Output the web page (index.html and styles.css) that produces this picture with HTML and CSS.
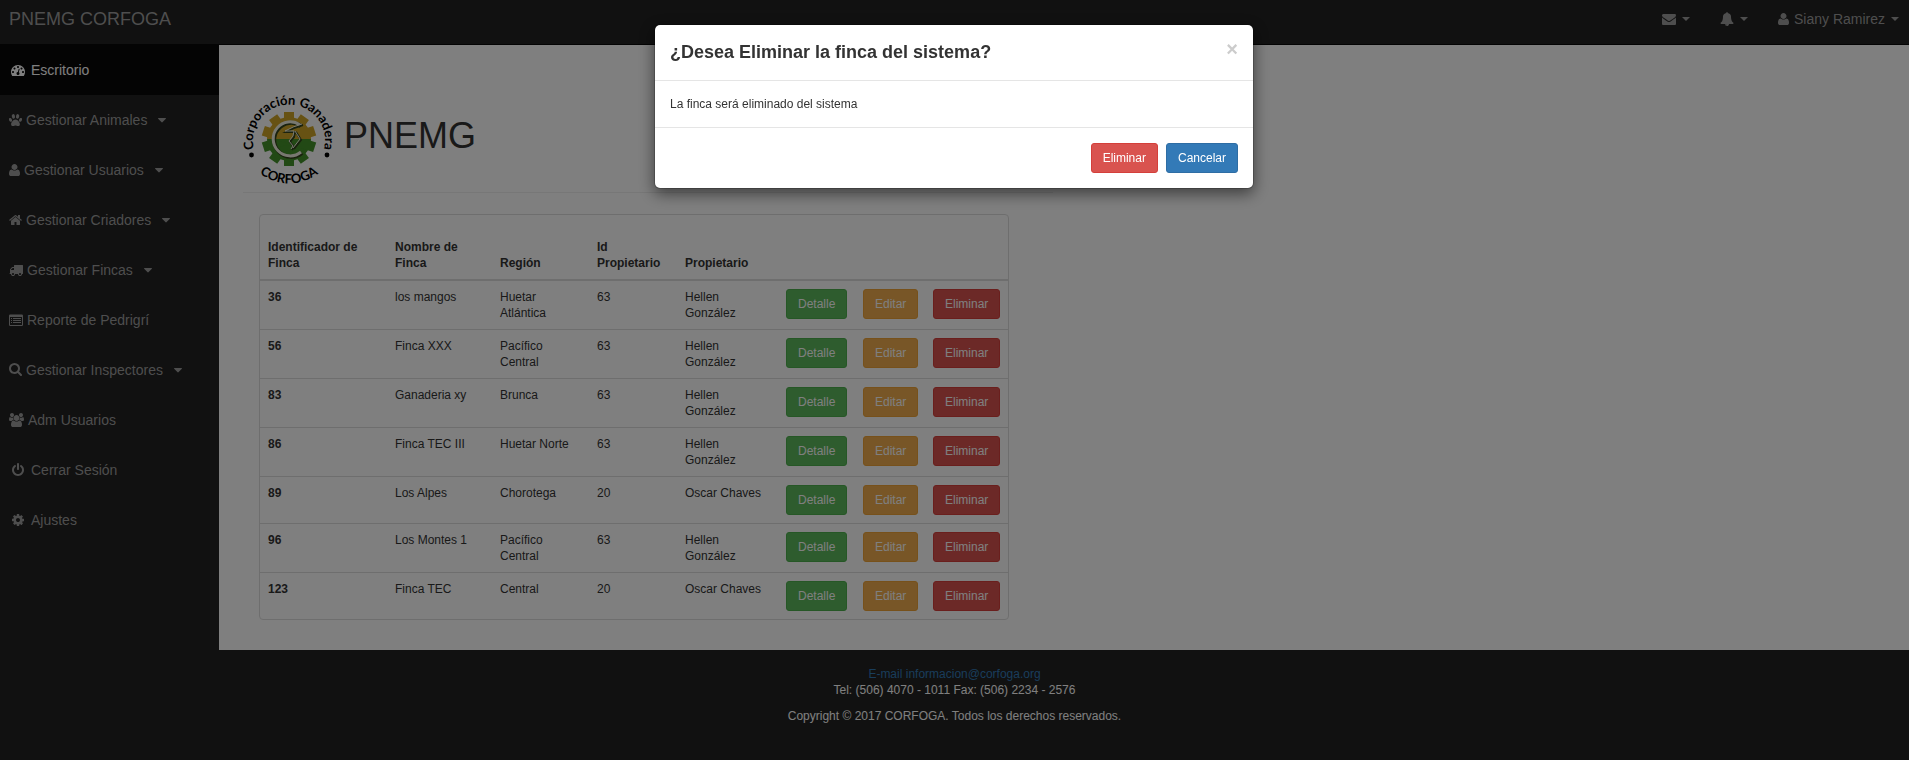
FILE: index.html
```html
<!DOCTYPE html>
<html lang="es">
<head>
<meta charset="utf-8">
<title>PNEMG CORFOGA</title>
<link rel="stylesheet" href="styles.css">
</head>
<body>
<svg class="sprite" aria-hidden="true">
  <symbol id="user" viewBox="192 0 1408 1792"><path d="M1600 1405q0 120-73 189.500t-194 69.500h-874q-121 0-194-69.500t-73-189.500q0-53 3.500-103.500t14-109 26.500-108.500 43-97.500 62-81 85.500-53.500 111.500-20q9 0 42 21.500t74.500 48 108 48 133.500 21.500 133.500-21.500 108-48 74.500-48 42-21.500q61 0 111.500 20t85.500 53.500 62 81 43 97.500 26.500 108.500 14 109 3.500 103.500zm-320-893q0 159-112.500 271.500t-271.500 112.500-271.500-112.500-112.500-271.500 112.500-271.500 271.500-112.500 271.500 112.500 112.500 271.500z"/></symbol>
  <symbol id="caret" viewBox="384 0 1024 1792"><path d="M1408 704q0 26-19 45l-448 448q-19 19-45 19t-45-19l-448-448q-19-19-19-45t19-45 45-19h896q26 0 45 19t19 45z"/></symbol>
</svg>

<header class="navbar">
  <a class="brand" href="#">PNEMG CORFOGA</a>
  <nav class="top-links" aria-label="Cuenta">
    <a href="#" aria-label="Mensajes"><svg class="w14" viewBox="0 0 1792 1792"><path d="M1792 710v794q0 66-47 113t-113 47h-1472q-66 0-113-47t-47-113v-794q44 49 101 87 362 246 497 345 57 42 92.500 65.500t94.500 48 110 24.500h2q51 0 110-24.500t94.500-48 92.500-65.500q170-123 498-345 57-39 100-87zm0-294q0 79-49 151t-122 123q-376 261-468 325-10 7-42.500 31t-54 38.500-52 32.500-57.500 27-50 9h-2q-23 0-50-9t-57.500-27-52-32.500-54-38.500-42.500-31q-91-64-262-182.500t-205-142.500q-62-42-117-115.500t-55-136.500q0-78 41.500-130t118.500-52h1472q65 0 112.500 47t47.500 113z"/></svg><span class="caret"></span></a>
    <a href="#" aria-label="Alertas"><svg class="w14" viewBox="0 0 1792 1792"><path d="M912 1696q0-16-16-16-59 0-101.500-42.500t-42.500-101.500q0-16-16-16t-16 16q0 73 51.500 124.500t124.500 51.500q16 0 16-16zm816-288q0 52-38 90t-90 38h-448q0 106-75 181t-181 75-181-75-75-181h-448q-52 0-90-38t-38-90q50-42 91-88t85-119.500 74.500-158.500 50-206 19.500-260q0-152 117-282.500t307-158.500q-8-19-8-39 0-40 28-68t68-28 68 28 28 68q0 20-8 39 190 28 307 158.500t117 282.500q0 139 19.500 260t50 206 74.500 158.500 85 119.500 91 88z"/></svg><span class="caret"></span></a>
    <a href="#"><svg class="w11"><use href="#user"/></svg><span>Siany Ramirez</span><span class="caret"></span></a>
  </nav>
</header>

<div class="layout">
  <nav class="sidebar" aria-label="Principal">
    <a class="active" href="#"><svg class="fw" viewBox="0 0 1792 1792"><path d="M384 1152q0-53-37.500-90.500t-90.500-37.500-90.500 37.500-37.500 90.500 37.500 90.500 90.500 37.500 90.500-37.500 37.500-90.500zm192-448q0-53-37.500-90.500t-90.500-37.500-90.500 37.500-37.500 90.500 37.500 90.500 90.500 37.500 90.500-37.500 37.500-90.500zm428 481l101-382q6-26-7.500-48.500t-38.500-29.500-48 6.500-30 39.500l-101 382q-60 5-107 43.500t-63 98.500q-20 77 20 146t117 89 146-20 89-117q16-60-6-117t-72-91zm660-33q0-53-37.500-90.500t-90.500-37.500-90.500 37.500-37.500 90.500 37.500 90.500 90.500 37.500 90.500-37.500 37.500-90.500zm-640-640q0-53-37.500-90.500t-90.500-37.500-90.500 37.500-37.500 90.500 37.500 90.500 90.500 37.500 90.500-37.500 37.500-90.500zm448 192q0-53-37.500-90.500t-90.500-37.500-90.500 37.500-37.500 90.500 37.500 90.500 90.500 37.500 90.500-37.500 37.500-90.500zm320 448q0 261-141 483-19 29-54 29h-1402q-35 0-54-29-141-221-141-483 0-182 71-348t191-286 286-191 348-71 348 71 286 191 191 286 71 348z"/></svg><span>Escritorio</span></a>
    <a href="#"><svg class="w13" viewBox="0 0 13 14"><ellipse cx="4.400" cy="3.400" rx="1.600" ry="2.300" transform="rotate(-12 4.400 3.400)"/><ellipse cx="8.600" cy="3.400" rx="1.600" ry="2.300" transform="rotate(12 8.600 3.400)"/><ellipse cx="1.500" cy="6.900" rx="1.400" ry="2" transform="rotate(-25 1.500 6.900)"/><ellipse cx="11.500" cy="6.900" rx="1.400" ry="2" transform="rotate(25 11.500 6.900)"/><path d="M6.500 6.400C8.800 6.400 10.900 9.300 10.900 11.200C10.900 12.700 9.800 13.200 8.800 13C7.800 12.800 7.300 12.400 6.500 12.400S5.200 12.800 4.200 13C3.200 13.200 2.100 12.700 2.100 11.200C2.100 9.300 4.200 6.400 6.500 6.400z"/></svg><span>Gestionar Animales</span><svg class="arrow"><use href="#caret"/></svg></a>
    <a href="#"><svg class="w11"><use href="#user"/></svg><span>Gestionar Usuarios</span><svg class="arrow"><use href="#caret"/></svg></a>
    <a href="#"><svg class="w13" viewBox="64 0 1664 1792"><path d="M1472 992v480q0 26-19 45t-45 19h-384v-384h-256v384h-384q-26 0-45-19t-19-45v-480q0-1 .5-3t.5-3l575-474 575 474q1 2 1 6zm223-69l-62 74q-8 9-21 11h-3q-13 0-21-7l-692-577-692 577q-12 8-24 7-13-2-21-11l-62-74q-8-10-7-23.500t11-21.500l719-599q32-26 76-26t76 26l244 204v-195q0-14 9-23t23-9h192q14 0 23 9t9 23v408l219 182q10 8 11 21.500t-7 23.500z"/></svg><span>Gestionar Criadores</span><svg class="arrow"><use href="#caret"/></svg></a>
    <a href="#"><svg class="w14" viewBox="0 0 1792 1792"><path d="M640 1408q0-52-38-90t-90-38-90 38-38 90 38 90 90 38 90-38 38-90zm-384-512h384v-256h-158q-13 0-22 9l-195 195q-9 9-9 22v30zm1280 512q0-52-38-90t-90-38-90 38-38 90 38 90 90 38 90-38 38-90zm256-1088v1024q0 15-4 26.500t-13.500 18.500-16.500 11.500-23.500 6-22.500 2-25.500 0-22.500-.5q0 106-75 181t-181 75-181-75-75-181h-384q0 106-75 181t-181 75-181-75-75-181h-64q-3 0-22.500.5t-25.500 0-22.500-2-23.500-6-16.500-11.500-13.500-18.500-4-26.500q0-26 19-45t45-19v-320q0-8-.5-35t0-38 2.500-34.500 6.500-37 14-30.500 22.500-30l198-198q19-19 50.500-32t58.500-13h160v-192q0-26 19-45t45-19h1024q26 0 45 19t19 45z"/></svg><span>Gestionar Fincas</span><svg class="arrow"><use href="#caret"/></svg></a>
    <a href="#"><svg class="w14" viewBox="0 0 14 14"><path fill-rule="evenodd" d="M1.200 1.500H12.800Q14 1.500 14 2.700V11.800Q14 13 12.800 13H1.200Q0 13 0 11.800V2.700Q0 1.500 1.200 1.500zM1 4V11.700Q1 12 1.300 12H12.700Q13 12 13 11.700V4z"/><path d="M2 5H3V6H2zM4 5H12V6H4zM2 7H3V8H2zM4 7H12V8H4zM2 9H3V10H2zM4 9H12V10H4z"/></svg><span>Reporte de Pedrigrí</span></a>
    <a href="#"><svg class="w13" viewBox="64 128 1664 1792"><path d="M1216 832q0-185-131.500-316.500t-316.500-131.500-316.500 131.500-131.500 316.500 131.500 316.500 316.500 131.500 316.500-131.500 131.500-316.500zm512 832q0 52-38 90t-90 38q-54 0-90-38l-343-342q-179 124-399 124-143 0-273.500-55.500t-225-150-150-225-55.500-273.500 55.500-273.500 150-225 225-150 273.500-55.500 273.500 55.500 225 150 150 225 55.500 273.500q0 220-124 399l343 343q37 37 37 90z"/></svg><span>Gestionar Inspectores</span><svg class="arrow"><use href="#caret"/></svg></a>
    <a href="#"><svg class="w15" viewBox="0 0 1920 1792"><path d="M593 896q-162 5-265 128h-134q-82 0-138-40.500t-56-118.500q0-353 124-353 6 0 43.500 21t97.500 42.500 119 21.500q67 0 133-23-5 37-5 66 0 139 81 256zm1071 637q0 120-73 189.500t-194 69.500h-874q-121 0-194-69.500t-73-189.500q0-53 3.500-103.500t14-109 26.500-108.500 43-97.500 62-81 85.500-53.500 111.500-20q10 0 43 21.500t73 48 107 48 135 21.500 135-21.500 107-48 73-48 43-21.500q61 0 111.500 20t85.500 53.500 62 81 43 97.500 26.500 108.500 14 109 3.500 103.500zm-1024-1277q0 106-75 181t-181 75-181-75-75-181 75-181 181-75 181 75 75 181zm704 384q0 159-112.500 271.500t-271.500 112.500-271.500-112.500-112.500-271.500 112.500-271.500 271.500-112.500 271.500 112.500 112.500 271.500zm576 225q0 78-56 118.500t-138 40.500h-134q-103-123-265-128 81-117 81-256 0-29-5-66 66 23 133 23 59 0 119-21.500t97.500-42.500 43.500-21q124 0 124 353zm-128-609q0 106-75 181t-181 75-181-75-75-181 75-181 181-75 181 75 75 181z"/></svg><span>Adm Usuarios</span></a>
    <a href="#"><svg class="fw" viewBox="0 0 1792 1792"><path d="M1664 896q0 156-61 298t-164 245-245 164-298 61-298-61-245-164-164-245-61-298q0-182 80.500-343t226.500-270q43-32 95.500-25t83.500 50q32 42 24.500 94.500t-49.500 84.500q-98 74-151.500 181t-53.500 228q0 104 40.500 198.500t109.500 163.500 163.500 109.500 198.500 40.500 198.500-40.500 163.500-109.500 109.500-163.500 40.500-198.500q0-121-53.500-228t-151.500-181q-42-32-49.500-84.500t24.500-94.500q31-43 84-50t95 25q146 109 226.500 270t80.500 343zm-640-768v640q0 52-38 90t-90 38-90-38-38-90v-640q0-52 38-90t90-38 90 38 38 90z"/></svg><span>Cerrar Sesión</span></a>
    <a href="#"><svg class="fw" viewBox="0 0 1792 1792"><path d="M1152 896q0-106-75-181t-181-75-181 75-75 181 75 181 181 75 181-75 75-181zm512-109v222q0 12-8 23t-20 13l-185 28q-19 54-39 91 35 50 107 138 10 12 10 25t-9 23q-27 37-99 108t-94 71q-12 0-26-9l-138-108q-44 23-91 38-16 136-29 186-7 28-36 28h-222q-14 0-24.500-8.500t-11.500-21.500l-28-184q-49-16-90-37l-141 107q-10 9-25 9-14 0-25-11-126-114-165-168-7-10-7-23 0-12 8-23 15-21 51-66.500t54-70.500q-27-50-41-99l-183-27q-13-2-21-12.500t-8-23.500v-222q0-12 8-23t19-13l186-28q14-46 39-92-40-57-107-138-10-12-10-24 0-10 9-23 26-36 98.500-107.500t94.500-71.500q13 0 26 10l138 107q44-23 91-38 16-136 29-186 7-28 36-28h222q14 0 24.500 8.500t11.500 21.500l28 184q49 16 90 37l142-107q9-9 24-9 13 0 25 10 129 119 165 170 7 8 7 22 0 12-8 23-15 21-51 66.500t-54 70.500q26 50 41 98l183 28q13 2 21 12.500t8 23.500z"/></svg><span>Ajustes</span></a>
  </nav>

  <main class="content">
    <div class="page-header">
      <svg class="logo" viewBox="0 0 90 90" role="img" aria-label="Corporación Ganadera CORFOGA">
        <defs>
          <path id="arc-top" d="M11 56A36 36 0 1 1 81 56"/>
          <path id="arc-bottom" d="M8 74Q46 107 84 74"/>
          <clipPath id="upper"><path d="M0 0H90V46H0z"/></clipPath>
          <clipPath id="lower"><path d="M0 46H90V90H0z"/></clipPath>
          <g id="gear">
            <circle cx="46" cy="46" r="22"/>
            <path id="teeth" d="M41 19H51V73H41z"/>
            <use href="#teeth" transform="rotate(36 46 46)"/>
            <use href="#teeth" transform="rotate(72 46 46)"/>
            <use href="#teeth" transform="rotate(108 46 46)"/>
            <use href="#teeth" transform="rotate(144 46 46)"/>
          </g>
        </defs>
        <g clip-path="url(#upper)" fill="#cfa526"><use href="#gear"/></g>
        <g clip-path="url(#lower)" fill="#44922a"><use href="#gear"/></g>
        <path d="M58 33A17 17 0 1 0 59 60" fill="none" stroke="#33441c" stroke-width="4"/>
        <path d="M57 32A17 17 0 1 0 58 59" fill="none" stroke="#f0f0e0" stroke-width="3"/>
        <path d="M60 32Q52 34 43 39L52 39L51 44L47 49L51 54L49 57M53 39L58 47L51 56" fill="none" stroke="#33441c" stroke-width="2"/>
        <path d="M59 31Q51 33 42 38L51 38L50 43L46 48L50 53L48 56M52 38L57 46L50 55" fill="none" stroke="#f0f0e0" stroke-width="1"/>
        <circle cx="8.500" cy="62" r="2.400"/><circle cx="84" cy="62" r="2.400"/>
        <text class="logo-top"><textPath href="#arc-top" startOffset="50%">Corporación Ganadera</textPath></text>
        <text class="logo-bottom"><textPath href="#arc-bottom" startOffset="50%">CORFOGA</textPath></text>
      </svg>
      <h1>PNEMG</h1>
    </div>
    <div class="panel">
      <table>
        <colgroup><col class="c-id"><col class="c-name"><col class="c-region"><col class="c-owner-id"><col class="c-owner"><col class="c-detail"><col class="c-edit"><col class="c-delete"></colgroup>
        <thead>
          <tr><th scope="col">Identificador de Finca</th><th scope="col">Nombre de Finca</th><th scope="col">Región</th><th scope="col">Id Propietario</th><th scope="col">Propietario</th><td></td><td></td><td></td></tr>
        </thead>
        <tbody>
          <tr><th scope="row">36</th><td>los mangos</td><td>Huetar Atlántica</td><td>63</td><td>Hellen González</td><td><button class="btn green">Detalle</button></td><td><button class="btn orange">Editar</button></td><td><button class="btn red">Eliminar</button></td></tr>
          <tr><th scope="row">56</th><td>Finca XXX</td><td>Pacífico Central</td><td>63</td><td>Hellen González</td><td><button class="btn green">Detalle</button></td><td><button class="btn orange">Editar</button></td><td><button class="btn red">Eliminar</button></td></tr>
          <tr><th scope="row">83</th><td>Ganaderia xy</td><td>Brunca</td><td>63</td><td>Hellen González</td><td><button class="btn green">Detalle</button></td><td><button class="btn orange">Editar</button></td><td><button class="btn red">Eliminar</button></td></tr>
          <tr><th scope="row">86</th><td>Finca TEC III</td><td>Huetar Norte</td><td>63</td><td>Hellen González</td><td><button class="btn green">Detalle</button></td><td><button class="btn orange">Editar</button></td><td><button class="btn red">Eliminar</button></td></tr>
          <tr><th scope="row">89</th><td>Los Alpes</td><td>Chorotega</td><td>20</td><td>Oscar Chaves</td><td><button class="btn green">Detalle</button></td><td><button class="btn orange">Editar</button></td><td><button class="btn red">Eliminar</button></td></tr>
          <tr><th scope="row">96</th><td>Los Montes 1</td><td>Pacífico Central</td><td>63</td><td>Hellen González</td><td><button class="btn green">Detalle</button></td><td><button class="btn orange">Editar</button></td><td><button class="btn red">Eliminar</button></td></tr>
          <tr><th scope="row">123</th><td>Finca TEC</td><td>Central</td><td>20</td><td>Oscar Chaves</td><td><button class="btn green">Detalle</button></td><td><button class="btn orange">Editar</button></td><td><button class="btn red">Eliminar</button></td></tr>
        </tbody>
      </table>
    </div>
  </main>
</div>

<footer class="footer">
  <p><a href="mailto:informacion@corfoga.org">E-mail informacion@corfoga.org</a><br>Tel: (506) 4070 - 1011 Fax: (506) 2234 - 2576</p>
  <p>Copyright © 2017 CORFOGA. Todos los derechos reservados.</p>
</footer>

<div class="backdrop">
  <div class="modal" role="dialog" aria-modal="true" aria-labelledby="modal-title">
    <div class="modal-header">
      <h4 id="modal-title">¿Desea Eliminar la finca del sistema?</h4>
      <button class="close" aria-label="Cerrar">×</button>
    </div>
    <div class="modal-body">La finca será eliminado del sistema</div>
    <div class="modal-footer">
      <button class="btn red">Eliminar</button>
      <button class="btn blue">Cancelar</button>
    </div>
  </div>
</div>
</body>
</html>
```
FILE: styles.css
```css
* { box-sizing: border-box; }
body {
  margin: 0;
  min-height: 100vh;
  display: flex;
  flex-direction: column;
  background: #222;
  color: #333;
  font: 12px/16px "Liberation Sans", Arial, sans-serif;
}
svg { flex: none; fill: currentColor; }
.sprite { position: absolute; width: 0; height: 0; }
a { text-decoration: none; }

.navbar {
  display: flex;
  justify-content: space-between;
  align-items: center;
  height: 45px;
  padding: 0 10px 6px 9px;
  border-bottom: 1px solid #080808;
  color: #9d9d9d;
}
.brand { color: inherit; font-size: 18px; line-height: 20px; }
.top-links { display: flex; gap: 30px; font-size: 14px; line-height: 20px; }
.top-links a { display: flex; align-items: center; gap: 5px; color: inherit; }
.caret {
  margin-left: 1px;
  border-top: 4px solid;
  border-right: 4px solid transparent;
  border-left: 4px solid transparent;
}
.w11 { width: 11px; height: 14px; }
.w13 { width: 13px; height: 14px; }
.w14 { width: 14px; height: 14px; }
.w15 { width: 15px; height: 14px; }
.fw { width: 14px; height: 14px; margin: 0 2px; }

.layout { display: flex; align-items: stretch; }
.sidebar { flex: none; width: 219px; font-size: 14px; line-height: 20px; }
.sidebar a {
  display: flex;
  align-items: center;
  gap: 4px;
  padding: 15px 9px;
  color: #9d9d9d;
}
.sidebar .active { background: #080808; color: #fff; }
.arrow { width: 8px; height: 14px; margin-left: 7px; }

.content { flex: 1; padding: 48px 20px 30px 24px; background: #fff; }
.page-header {
  display: flex;
  align-items: center;
  gap: 11px;
  max-width: 810px;
  padding-bottom: 9px;
  margin-bottom: 21px;
  border-bottom: 1px solid #eee;
}
.logo { width: 90px; height: 90px; fill: #000; overflow: visible; }
.logo-top { font: bold 13px Lato, sans-serif; text-anchor: middle; }
.logo-bottom { font: bold 13px Lato, sans-serif; text-anchor: middle; }
h1 { margin: 0; padding-bottom: 5px; font-size: 36px; font-weight: 400; line-height: 40px; }

.panel {
  width: 750px;
  max-width: 100%;
  margin-left: 16px;
  padding-top: 16px;
  border: 1px solid #ddd;
  border-radius: 4px;
}
table { width: 100%; table-layout: fixed; border-collapse: separate; border-spacing: 0; }
.c-id { width: 127px; }
.c-name { width: 105px; }
.c-region { width: 97px; }
.c-owner-id { width: 88px; }
.c-owner { width: 101px; }
.c-detail { width: 77px; }
.c-edit { width: 70px; }
.c-delete { width: 83px; }
th, td { padding: 8px; text-align: left; vertical-align: top; border-top: 1px solid #ddd; }
thead th, thead td { vertical-align: bottom; border-top: 0; border-bottom: 2px solid #ddd; }
tbody tr:first-child > * { border-top: 0; }

.btn {
  display: block;
  padding: 6px 11px;
  border: 1px solid;
  border-radius: 3px;
  color: #fff;
  font: inherit;
}
.green { background: #5cb85c; border-color: #4cae4c; }
.orange { background: #f0ad4e; border-color: #eea236; }
.red { background: #d9534f; border-color: #d43f3a; }
.blue { background: #337ab7; border-color: #2e6da4; }

.footer { padding-top: 16px; color: #fff; text-align: center; }
.footer p { margin: 0 0 10px; }
.footer a { color: #337ab7; }

.backdrop {
  position: fixed;
  inset: 0;
  padding: 24px 1px 0 0;
  background: rgba(0, 0, 0, .5);
}
.modal {
  width: 600px;
  max-width: 100%;
  margin: 0 auto;
  background: #fff;
  background-clip: padding-box;
  border: 1px solid rgba(0, 0, 0, .2);
  border-radius: 6px;
  box-shadow: 0 5px 15px rgba(0, 0, 0, .5);
}
.modal-header {
  display: flex;
  justify-content: space-between;
  align-items: flex-start;
  padding: 15px 15px 16px;
  border-bottom: 1px solid #e5e5e5;
}
h4 { margin: 0; font-size: 18px; line-height: 24px; }
.close {
  padding: 0;
  border: 0;
  background: none;
  color: #ccc;
  font: bold 20px/18px "Liberation Sans", Arial, sans-serif;
}
.modal-body { padding: 15px; }
.modal-footer {
  display: flex;
  justify-content: flex-end;
  gap: 8px;
  padding: 15px;
  border-top: 1px solid #e5e5e5;
}
```
